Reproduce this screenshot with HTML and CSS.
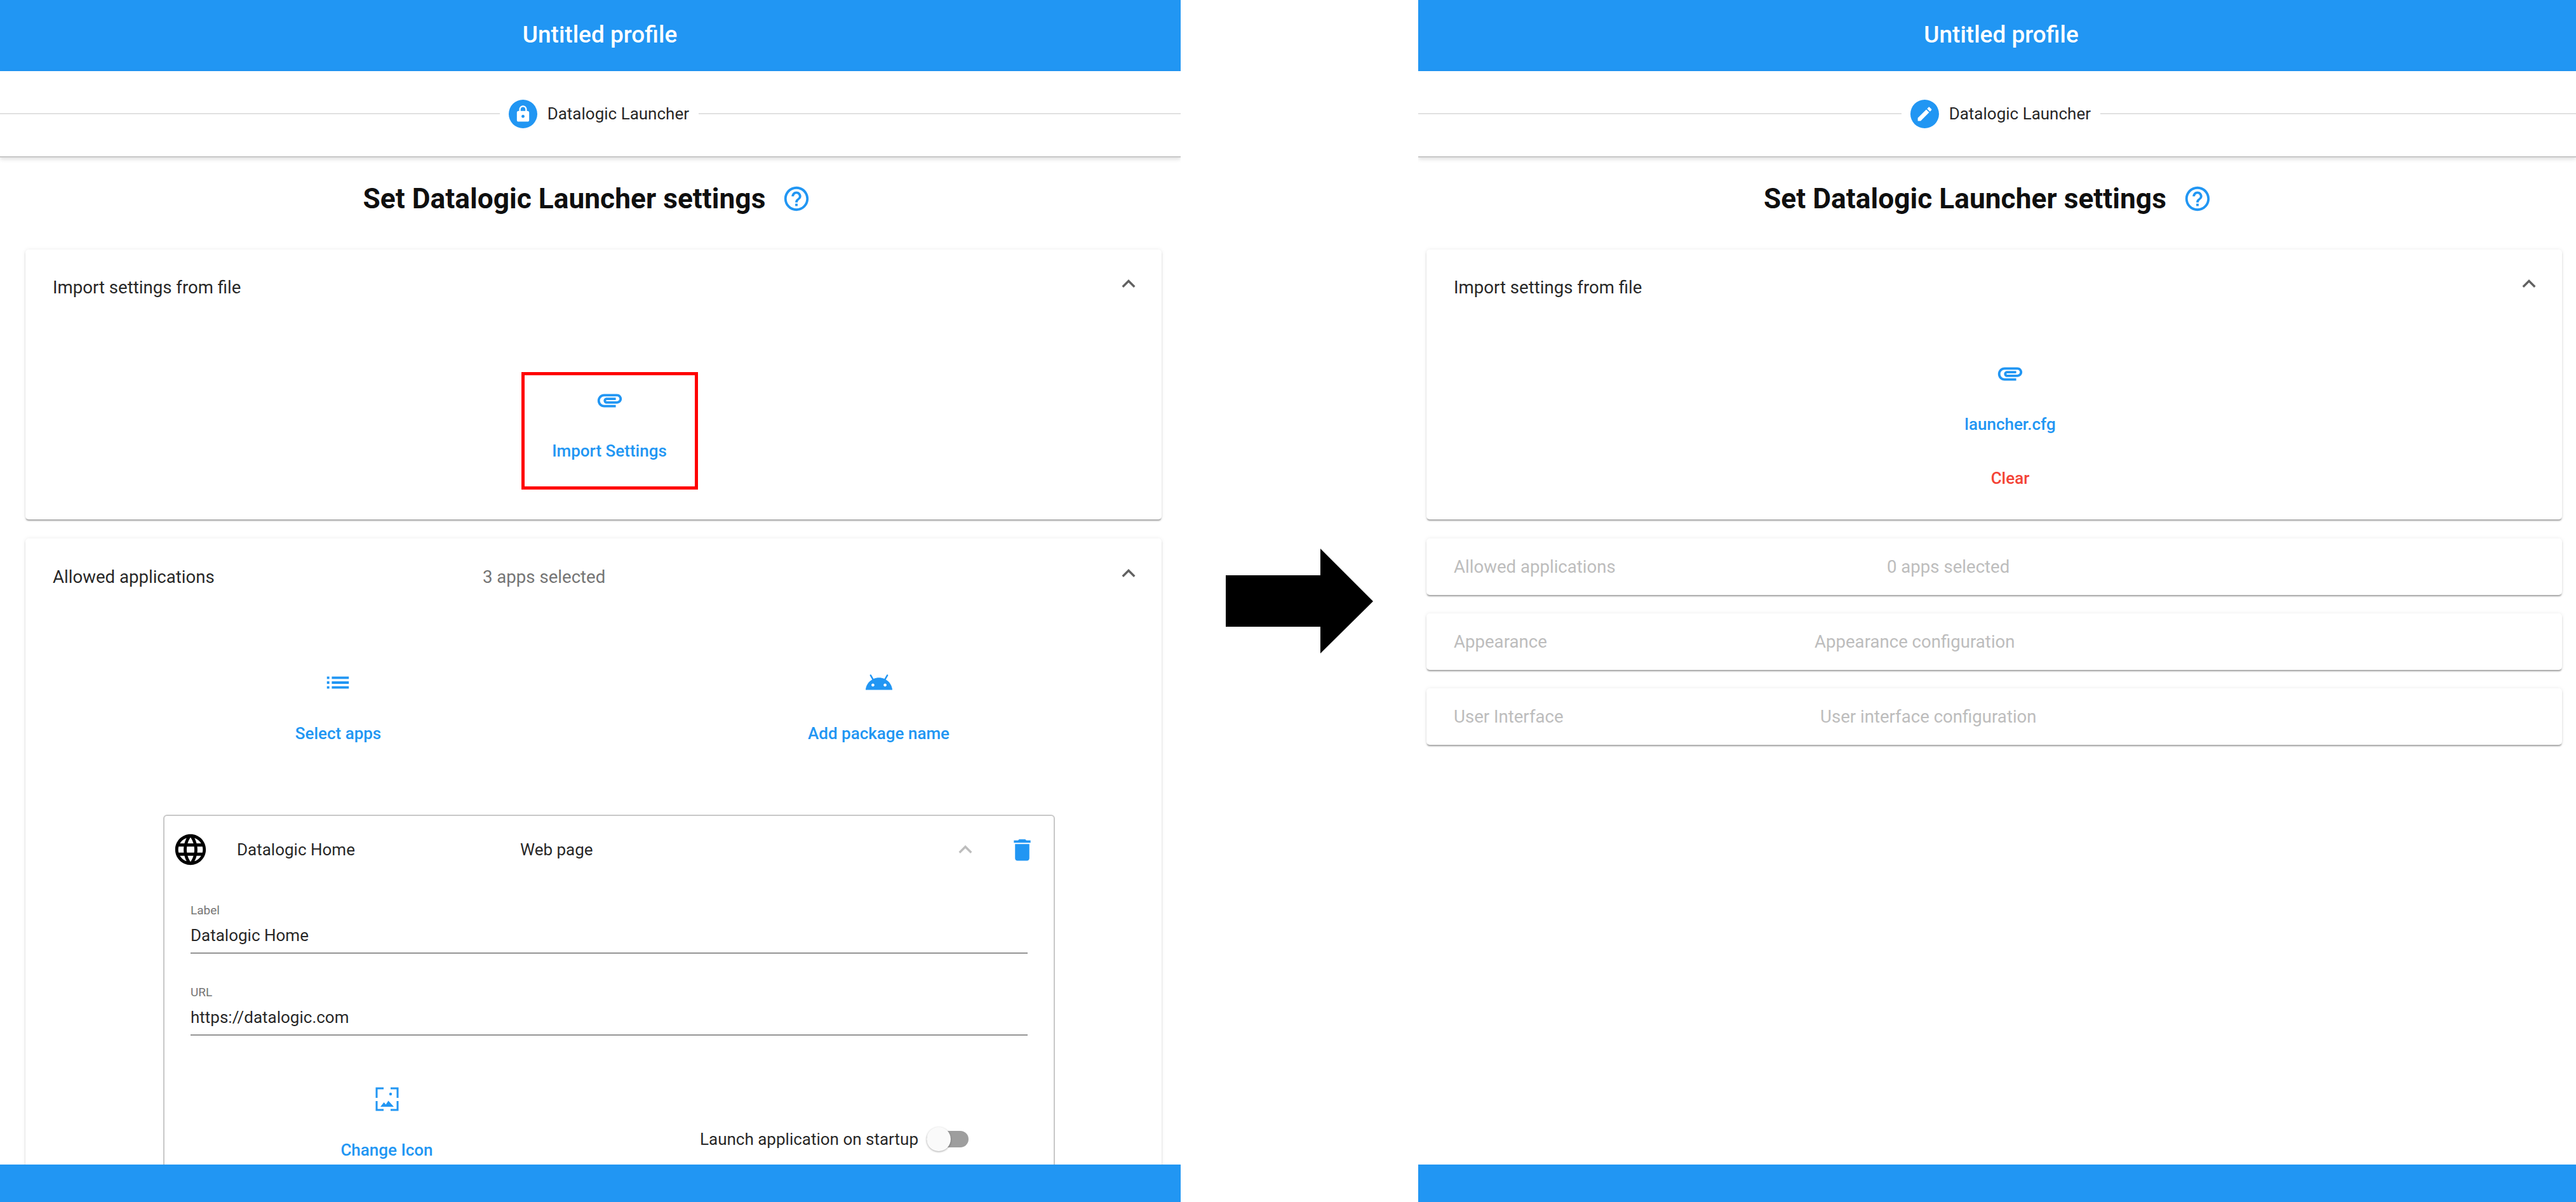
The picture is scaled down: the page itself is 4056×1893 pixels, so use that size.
FILE: index.html
```html
<!DOCTYPE html>
<html>
<head>
  <title>Datalogic Launcher settings</title>
  <link rel="stylesheet" href="styles.css">
</head>
<body>
  <svg class="sprite" xmlns="http://www.w3.org/2000/svg">
    <symbol id="i-lock" viewBox="0 0 24 24"><path d="M18 8h-1V6c0-2.76-2.24-5-5-5S7 3.24 7 6v2H6c-1.1 0-2 .9-2 2v10c0 1.1.9 2 2 2h12c1.1 0 2-.9 2-2V10c0-1.1-.9-2-2-2zm-6 9c-1.1 0-2-.9-2-2s.9-2 2-2 2 .9 2 2-.9 2-2 2zm3.1-9H8.9V6c0-1.71 1.39-3.1 3.1-3.1 1.71 0 3.1 1.39 3.1 3.1v2z"/></symbol>
    <symbol id="i-edit" viewBox="0 0 24 24"><path d="M3 17.25V21h3.75L17.81 9.94l-3.75-3.75L3 17.25zM20.71 7.04c.39-.39.39-1.02 0-1.41l-2.34-2.34c-.39-.39-1.02-.39-1.41 0l-1.83 1.83 3.75 3.75 1.83-1.83z"/></symbol>
    <symbol id="i-help" viewBox="0 0 24 24"><path d="M11 18h2v-2h-2v2zm1-16C6.48 2 2 6.48 2 12s4.48 10 10 10 10-4.48 10-10S17.52 2 12 2zm0 18c-4.41 0-8-3.59-8-8s3.59-8 8-8 8 3.59 8 8-3.59 8-8 8zm0-14c-2.21 0-4 1.79-4 4h2c0-1.1.9-2 2-2s2 .9 2 2c0 2-3 1.75-3 5h2c0-2.25 3-2.5 3-5 0-2.21-1.79-4-4-4z"/></symbol>
    <symbol id="i-less" viewBox="0 0 24 24"><path d="M12 8l-6 6 1.41 1.41L12 10.83l4.59 4.58L18 14z"/></symbol>
    <symbol id="i-clip" viewBox="0 0 24 24"><path d="M2 12.5C2 9.46 4.46 7 7.5 7H18c2.21 0 4 1.79 4 4s-1.79 4-4 4H9.5C8.12 15 7 13.88 7 12.5S8.12 10 9.5 10H17v2H9.41c-.55 0-.55 1 0 1H18c1.1 0 2-.9 2-2s-.9-2-2-2H7.5C5.57 9 4 10.57 4 12.5S5.57 16 7.5 16H17v2H7.5C4.46 18 2 15.54 2 12.5z"/></symbol>
    <symbol id="i-list" viewBox="0 0 24 24"><path d="M3 13h2v-2H3v2zm0 4h2v-2H3v2zm0-8h2V7H3v2zm4 4h14v-2H7v2zm0 4h14v-2H7v2zM7 7v2h14V7H7z"/></symbol>
    <symbol id="i-android" viewBox="0 0 24 24"><path d="M17.6 9.48l1.84-3.18c.16-.31.04-.69-.26-.85-.29-.15-.65-.06-.83.22l-1.88 3.24c-2.86-1.21-6.08-1.21-8.94 0L5.65 5.67c-.19-.29-.58-.38-.87-.2-.28.18-.37.54-.22.83L6.4 9.48C3.3 11.25 1.28 14.44 1 18h22c-.28-3.56-2.3-6.75-5.4-8.52zM7 15.25c-.69 0-1.25-.56-1.25-1.25s.56-1.25 1.25-1.25 1.25.56 1.25 1.25-.56 1.25-1.25 1.25zm10 0c-.69 0-1.25-.56-1.25-1.25s.56-1.25 1.25-1.25 1.25.56 1.25 1.25-.56 1.25-1.25 1.25z"/></symbol>
    <symbol id="i-globe" viewBox="0 0 24 24"><path d="M11.99 2C6.47 2 2 6.48 2 12s4.47 10 9.99 10C17.52 22 22 17.52 22 12S17.52 2 11.99 2zm6.93 6h-2.95c-.32-1.25-.78-2.45-1.38-3.56 1.84.63 3.37 1.91 4.33 3.56zM12 4.04c.83 1.2 1.48 2.53 1.91 3.96h-3.82c.43-1.43 1.08-2.76 1.91-3.96zM4.26 14C4.1 13.36 4 12.69 4 12s.1-1.36.26-2h3.38c-.08.66-.14 1.32-.14 2 0 .68.06 1.34.14 2H4.26zm.82 2h2.95c.32 1.25.78 2.45 1.38 3.56-1.84-.63-3.37-1.9-4.33-3.56zm2.95-8H5.08c.96-1.66 2.49-2.93 4.33-3.56C8.81 5.55 8.35 6.75 8.03 8zM12 19.96c-.83-1.2-1.48-2.53-1.91-3.96h3.82c-.43 1.43-1.08 2.76-1.91 3.96zM14.34 14H9.66c-.09-.66-.16-1.32-.16-2 0-.68.07-1.35.16-2h4.68c.09.65.16 1.32.16 2 0 .68-.07 1.34-.16 2zm.25 5.56c.6-1.11 1.06-2.31 1.38-3.56h2.95c-.96 1.65-2.49 2.93-4.33 3.56zM16.36 14c.08-.66.14-1.32.14-2 0-.68-.06-1.34-.14-2h3.38c.16.64.26 1.31.26 2s-.1 1.36-.26 2h-3.38z"/></symbol>
    <symbol id="i-delete" viewBox="0 0 24 24"><path d="M6 19c0 1.1.9 2 2 2h8c1.1 0 2-.9 2-2V7H6v12zM19 4h-3.5l-1-1h-5l-1 1H5v2h14V4z"/></symbol>
  </svg>

  <!-- before -->
  <section class="screen screen-before">
    <header class="topbar">Untitled profile</header>
    <div class="stepper">
      <span class="step-line"></span>
      <span class="step-icon"><svg><use href="#i-lock"/></svg></span>
      <span class="step-label">Datalogic Launcher</span>
      <span class="step-line step-line-end"></span>
    </div>
    <main class="content">
      <div class="page-title">
        <h1>Set Datalogic Launcher settings</h1>
        <svg class="icon-help"><use href="#i-help"/></svg>
      </div>

      <div class="panel panel-import">
        <div class="panel-head">
          <span class="panel-title">Import settings from file</span>
          <svg class="icon-less"><use href="#i-less"/></svg>
        </div>
        <div class="panel-body">
          <button class="action action-marked">
            <svg class="icon-action"><use href="#i-clip"/></svg>
            <span>Import Settings</span>
          </button>
        </div>
      </div>

      <div class="panel">
        <div class="panel-head panel-head-tall">
          <span class="panel-title">Allowed applications</span>
          <span class="panel-sub sub-selected">3 apps selected</span>
          <svg class="icon-less"><use href="#i-less"/></svg>
        </div>
        <div class="app-actions">
          <button class="action">
            <svg class="icon-action"><use href="#i-list"/></svg>
            <span>Select apps</span>
          </button>
          <button class="action">
            <svg class="icon-action"><use href="#i-android"/></svg>
            <span>Add package name</span>
          </button>
        </div>

        <div class="app-card">
          <div class="app-head">
            <svg class="icon-globe"><use href="#i-globe"/></svg>
            <span class="app-name">Datalogic Home</span>
            <span class="app-type">Web page</span>
            <svg class="icon-less icon-less-faint"><use href="#i-less"/></svg>
            <svg class="icon-delete"><use href="#i-delete"/></svg>
          </div>
          <div class="field">
            <div class="field-label">Label</div>
            <div class="field-value">Datalogic Home</div>
          </div>
          <div class="field">
            <div class="field-label">URL</div>
            <div class="field-value">https://datalogic.com</div>
          </div>
          <div class="app-foot">
            <button class="action action-icon">
              <svg class="icon-change" viewBox="0 0 37 38">
                <path class="frame" d="M2 17V2h11M24 2h11v15M2 22v14h11M24 36h11V22"/>
                <circle cx="24" cy="11" r="2.2"/>
                <path d="M8 31l5.500-7 3 3.500 4-6 8.500 9.500z"/>
              </svg>
              <span>Change Icon</span>
            </button>
            <div class="startup">
              <span>Launch application on startup</span>
              <span class="toggle"><span class="toggle-thumb"></span></span>
            </div>
          </div>
        </div>
      </div>
    </main>
    <footer class="bottombar"></footer>
  </section>

  <div class="arrow">
    <svg width="232" height="165" viewBox="0 0 232 165"><path d="M0 42h149V0l83 83-83 82v-42H0z"/></svg>
  </div>

  <!-- after -->
  <section class="screen screen-after">
    <header class="topbar">Untitled profile</header>
    <div class="stepper">
      <span class="step-line"></span>
      <span class="step-icon"><svg><use href="#i-edit"/></svg></span>
      <span class="step-label">Datalogic Launcher</span>
      <span class="step-line step-line-end"></span>
    </div>
    <main class="content">
      <div class="page-title">
        <h1>Set Datalogic Launcher settings</h1>
        <svg class="icon-help"><use href="#i-help"/></svg>
      </div>

      <div class="panel panel-import">
        <div class="panel-head">
          <span class="panel-title">Import settings from file</span>
          <svg class="icon-less"><use href="#i-less"/></svg>
        </div>
        <div class="panel-body panel-body-file">
          <svg class="icon-action"><use href="#i-clip"/></svg>
          <span class="file-name">launcher.cfg</span>
          <span class="file-clear">Clear</span>
        </div>
      </div>

      <div class="panel panel-off">
        <span class="panel-title">Allowed applications</span>
        <span class="panel-sub sub-apps">0 apps selected</span>
      </div>
      <div class="panel panel-off">
        <span class="panel-title">Appearance</span>
        <span class="panel-sub">Appearance configuration</span>
      </div>
      <div class="panel panel-off">
        <span class="panel-title">User Interface</span>
        <span class="panel-sub sub-ui">User interface configuration</span>
      </div>
    </main>
    <footer class="bottombar"></footer>
  </section>
</body>
</html>
```

FILE: styles.css
```css
* {
  box-sizing: border-box;
}
html, body {
  margin: 0;
  height: 100%;
}
body {
  display: flex;
  height: 1893px;
  overflow: hidden;
  background: white;
  color: rgba(0,0,0,0.87);
  font-family: Roboto, "Liberation Sans", sans-serif;
  font-size: 26px;
}
svg {
  fill: currentColor;
  flex: none;
}
.sprite {
  display: none;
}

.screen {
  display: flex;
  flex-direction: column;
  min-width: 0;
  height: 100%;
  overflow: hidden;
}
.screen-before {
  width: 1859px;
}
.screen-after {
  flex: 1;
}
.arrow {
  width: 374px;
  display: flex;
  align-items: center;
  justify-content: center;
  color: black;
}

.topbar {
  height: 112px;
  flex: none;
  display: flex;
  align-items: center;
  justify-content: center;
  padding-left: 30px;
  padding-bottom: 4px;
  background: #2196f3;
  color: white;
  font-size: 37px;
  font-weight: 500;
}
.screen-after .topbar {
  padding-left: 13px;
}
.bottombar {
  height: 59px;
  flex: none;
  background: #2196f3;
}

.stepper {
  height: 136px;
  flex: none;
  display: flex;
  align-items: center;
  border-bottom: 2px solid #c8c8c8;
  box-shadow: 0 3px 6px rgba(0,0,0,0.12);
}
.step-line {
  flex: 1;
  height: 2px;
  background: #e0e0e0;
}
.step-line-end {
  flex: none;
  width: 759px;
  margin-left: 15px;
}
.screen-after .step-line-end {
  width: 749px;
}
.step-icon {
  width: 45px;
  height: 45px;
  margin-left: 14px;
  margin-right: 16px;
  display: flex;
  align-items: center;
  justify-content: center;
  border-radius: 50%;
  background: #2196f3;
  color: white;
}
.step-icon svg {
  width: 29px;
  height: 29px;
}
.step-label {
  white-space: nowrap;
}

.content {
  flex: 1;
  min-height: 0;
  overflow: hidden;
  padding: 40px 30px 0 40px;
}
.screen-after .content {
  padding: 40px 22px 0 13px;
}
.page-title {
  height: 50px;
  margin-bottom: 55px;
  padding-right: 20px;
  display: flex;
  align-items: center;
  justify-content: center;
  gap: 26px;
}
.page-title h1 {
  margin: 0;
  font-size: 44.300px;
  font-weight: 700;
  color: rgba(0,0,0,0.95);
}
.icon-help {
  width: 46px;
  height: 46px;
  color: #2196f3;
}

.panel {
  margin-bottom: 30px;
  border-radius: 5px;
  background: white;
  box-shadow: 0 3px 2px -1px rgba(0,0,0,0.25), 0 2px 3px rgba(0,0,0,0.12), 0 0 6px rgba(0,0,0,0.08);
}
.panel-head {
  height: 118px;
  padding: 0 31px 0 43px;
  display: flex;
  align-items: center;
  font-size: 27.600px;
}
.panel-head-tall {
  height: 120px;
}
.panel-head-tall .panel-title,
.panel-off .panel-title {
  width: 568px;
  flex: none;
}
.panel-sub {
  color: #757575;
}
.sub-selected {
  margin-left: 109px;
}
.sub-apps {
  margin-left: 114px;
}
.sub-ui {
  margin-left: 9px;
}
.icon-less {
  width: 42px;
  height: 42px;
  margin-left: auto;
  margin-top: -10px;
  color: #616161;
}

.panel-off {
  height: 89px;
  margin-bottom: 29px;
  padding: 0 43px;
  display: flex;
  align-items: center;
  color: #bdbdbd;
  font-size: 27.600px;
}
.panel-off .panel-sub {
  color: #bdbdbd;
}

.action {
  padding: 0;
  border: none;
  background: none;
  display: flex;
  flex-direction: column;
  align-items: center;
  gap: 40px;
  color: #2196f3;
  font: inherit;
  font-weight: 500;
  line-height: 34px;
}
.action-marked {
  width: 278px;
  height: 185px;
  padding-top: 16px;
  border: 5px solid #ff0000;
}
.icon-action {
  width: 46px;
  height: 46px;
  color: #2196f3;
}

.panel-body {
  padding: 75px 0 47px 50px;
  display: flex;
  flex-direction: column;
  align-items: center;
}
.panel-body-file {
  padding: 54px 0 48px 50px;
  color: #2196f3;
  font-weight: 500;
  line-height: 34px;
}
.file-name {
  margin-top: 40px;
}
.file-clear {
  margin-top: 51px;
  color: #f44336;
}

.app-actions {
  display: grid;
  grid-template-columns: 851px 851px;
  margin: 84px 0 111px 67px;
  justify-items: center;
}

.app-card {
  width: 1404px;
  margin-left: 217px;
  border: 2px solid #c8c8c8;
  border-radius: 6px;
}
.app-head {
  height: 106px;
  display: flex;
  align-items: center;
  padding: 0 27px 0 12px;
}
.icon-globe {
  width: 58px;
  height: 58px;
  color: black;
}
.app-name {
  width: 446px;
  margin-left: 44px;
}
.app-type {
  flex: 1;
}
.icon-less-faint {
  margin: 0 46px 0 0;
  color: #bdbdbd;
}
.icon-delete {
  width: 45px;
  height: 45px;
  color: #2196f3;
}

.field {
  margin: 30px 41px 48px;
  border-bottom: 2px solid #949494;
  padding-bottom: 7px;
}
.field + .field {
  margin-top: 0;
}
.field-label {
  font-size: 19px;
  line-height: 26px;
  color: #757575;
}
.field-value {
  margin-top: 6px;
  line-height: 40px;
}

.app-foot {
  display: flex;
  margin-top: -48px;
  padding-top: 81px;
  padding-bottom: 40px;
}
.action-icon {
  width: 700px;
  gap: 44px;
}
.icon-change {
  width: 37px;
  height: 38px;
}
.icon-change .frame {
  fill: none;
  stroke: currentColor;
  stroke-width: 3;
}
.startup {
  margin-left: 143px;
  margin-top: 63px;
  height: 38px;
  display: flex;
  align-items: center;
  gap: 13px;
}
.toggle {
  position: relative;
  width: 66px;
  height: 26px;
  border-radius: 13px;
  background: #9e9e9e;
}
.toggle-thumb {
  position: absolute;
  left: 0;
  top: -6px;
  width: 38px;
  height: 38px;
  border-radius: 50%;
  background: #fafafa;
  box-shadow: 0 1px 3px rgba(0,0,0,0.35);
}
```
